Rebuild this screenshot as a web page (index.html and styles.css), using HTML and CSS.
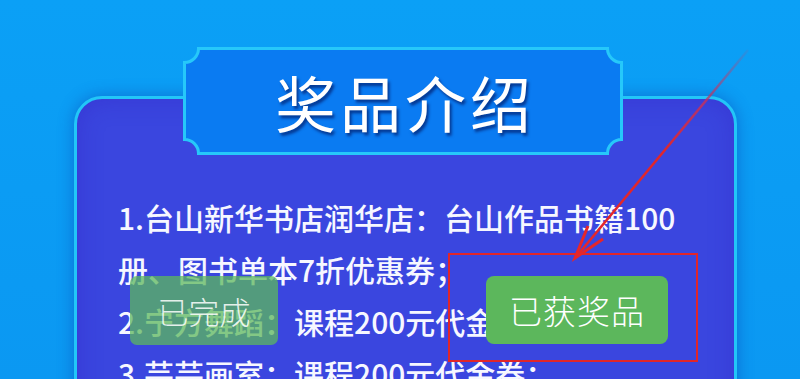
FILE: index.html
```html
<!DOCTYPE html>
<html lang="zh-CN">
<head>
  <meta charset="UTF-8" />
  <meta name="viewport" content="width=device-width, initial-scale=1.0" />
  <link rel="stylesheet" href="styles.css">
</head>
<body>

  <main class="page">
    <section class="card">
      <div class="badge">
        <svg class="badge-frame" viewBox="0 0 440 108" width="440" height="108">
          <path d="M15.5 1.5 H424.5 A14 14 0 0 0 438.5 15.5 V92.5 A14 14 0 0 0 424.5 106.5 H15.5 A14 14 0 0 0 1.5 92.5 V15.5 A14 14 0 0 0 15.5 1.5 Z" />
        </svg>
        <h1>奖品介绍</h1>
      </div>

      <div class="prizes">
        <p>1.台山新华书店润华店：台山作品书籍100册、图书单本7折优惠券；</p>
        <p>2.宁方舞蹈：课程200元代金券；</p>
        <p>3.芸芸画室：课程200元代金券；</p>
      </div>
    </section>
  </main>

  <!-- toast over the list -->
  <div class="toast">已完成</div>

  <!-- annotation frame with the button -->
  <div class="mark">
    <button class="got-btn">已获奖品</button>
  </div>

  <svg class="arrow" viewBox="0 0 800 379" width="800" height="379">
    <defs>
      <linearGradient id="arrowFade" gradientUnits="userSpaceOnUse" x1="748" y1="50" x2="575" y2="258">
        <stop offset="0" stop-color="#c83a6a" stop-opacity="0.1" />
        <stop offset="0.25" stop-color="#c8305a" stop-opacity="0.8" />
        <stop offset="0.5" stop-color="#e0262a" />
        <stop offset="1" stop-color="#e6262a" />
      </linearGradient>
    </defs>
    <line x1="748" y1="50" x2="576" y2="257" stroke="url(#arrowFade)" stroke-width="2.5" />
    <polyline points="603,239 575,258 588,226" fill="none" stroke="#e6262a" stroke-width="3" stroke-linejoin="miter" />
  </svg>

</body>
</html>
```

FILE: styles.css
```css
body {
  margin: 0;
  height: 379px;
  overflow: hidden;
  background: linear-gradient(to bottom, #0ba0f6, #0b98f2);
  font-family: "Noto Sans CJK SC", "Noto Sans", sans-serif;
  color: #fff;
}

.page {
  padding-top: 96px;
}

.card {
  box-sizing: border-box;
  width: 663px;
  min-height: 420px;
  margin-left: 74px;
  border: 3px solid #22c6f8;
  border-radius: 28px;
  background-color: #3a46df;
  box-shadow: 0 0 16px rgba(10, 60, 170, 0.45), inset 0 0 24px rgba(50, 30, 190, 0.35);
}

.badge {
  display: grid;
  width: 440px;
  height: 108px;
  margin: -52px 0 0 106px;
}

.badge-frame,
.badge h1 {
  grid-area: 1 / 1;
}

.badge-frame path {
  fill: #0a7bf2;
  stroke: #26c8fa;
  stroke-width: 3;
}

.badge h1 {
  margin: 0;
  align-self: center;
  justify-self: center;
  font-size: 61px;
  font-weight: 400;
  letter-spacing: 4px;
  line-height: 1;
  padding-left: 4px;
  text-shadow: 2px 3px 3px rgba(0, 10, 80, 0.6);
}

.prizes {
  padding: 36px 40px 0 41px;
}

.prizes p {
  margin: 0;
  font-size: 30px;
  line-height: 52px;
  font-weight: 500;
  color: #f6f7ff;
}

.toast {
  position: absolute;
  left: 130px;
  top: 276px;
  width: 148px;
  height: 69px;
  display: flex;
  justify-content: center;
  align-items: center;
  border-radius: 7px;
  background-color: rgba(92, 184, 92, 0.75);
  color: rgba(255, 255, 255, 0.85);
  font-size: 31px;
  font-weight: 300;
}

.mark {
  position: absolute;
  left: 448px;
  top: 253px;
  box-sizing: border-box;
  width: 250px;
  height: 109px;
  border: 2px solid #e0262a;
  display: flex;
  justify-content: center;
  align-items: center;
  padding: 4px 0 0 8px;
}

.got-btn {
  width: 182px;
  height: 68px;
  border: none;
  border-radius: 8px;
  background-color: #5cb75c;
  color: #fff;
  font-family: "Noto Sans CJK SC", sans-serif;
  font-size: 33px;
  font-weight: 300;
  letter-spacing: 1px;
}

.arrow {
  position: absolute;
  left: 0;
  top: 0;
  pointer-events: none;
}
```
